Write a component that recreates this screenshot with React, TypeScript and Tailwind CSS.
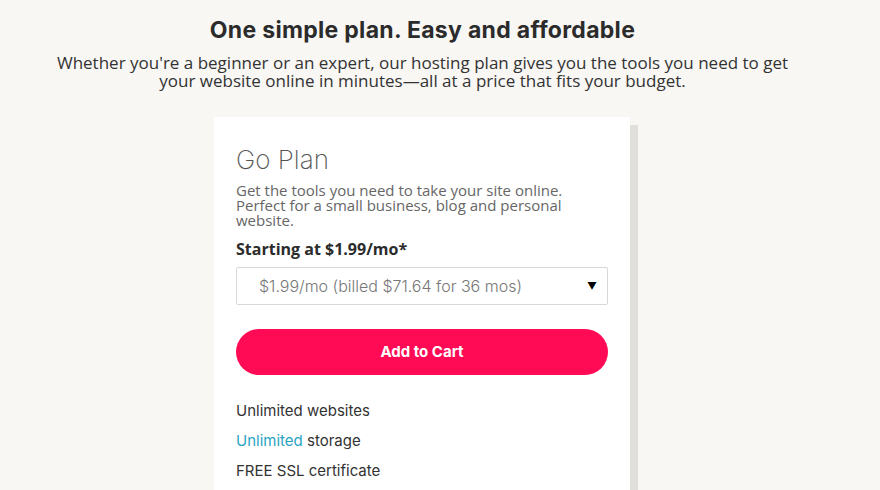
export default function App() {
  return (
    <div className="min-h-screen bg-[#f8f7f4] text-[#2b2b2b] overflow-hidden" style={{ height: 490 }}>
      <div className="w-[845px] flex flex-col items-center pt-[16px]">
        <h1 className="font-['Inter',sans-serif] font-bold text-[23px] leading-[28px] tracking-[0.3px] text-[#2b2b2b]">
          One simple plan. Easy and affordable
        </h1>
        <p className="mt-[10px] font-['Open_Sans',sans-serif] text-[17px] leading-[18px] text-[#333] text-center w-[745px]">
          Whether you're a beginner or an expert, our hosting plan gives you the tools you need to get your website online in minutes—all at a price that fits your budget.
        </p>
      </div>
      <div className="ml-[214px] mt-[27px] w-[416px] bg-white shadow-[8px_8px_0_#e0dfdb] px-[22px] pt-[28px] pb-[40px]">
        <h2 className="font-['Inter',sans-serif] font-extralight text-[26px] leading-[30px] text-[#555]">Go Plan</h2>
        <p className="mt-[8px] max-w-[340px] font-['Open_Sans',sans-serif] text-[15px] leading-[15px] text-[#666]">
          Get the tools you need to take your site online. Perfect for a small business, blog and personal website.
        </p>
        <p className="mt-[11px] font-['Open_Sans',sans-serif] font-bold text-[16px] leading-[20px] text-[#2b2b2b]">
          Starting at $1.99/mo*
        </p>
        <div className="mt-[8px] h-[38px] border border-[#d8d8d8] rounded-[2px] flex items-center justify-between pl-[22px] pr-[10px] font-['Inter',sans-serif] font-light text-[16px] text-[#777]">
          <span>$1.99/mo (billed $71.64 for 36 mos)</span>
          <span className="text-[10px] text-black">▼</span>
        </div>
        <button className="mt-[24px] w-full h-[46px] rounded-full bg-[#ff0a54] text-white font-['Inter',sans-serif] font-bold text-[15px]">
          Add to Cart
        </button>
        <ul className="mt-[27px] flex flex-col gap-[12px] font-['Inter',sans-serif] text-[15px] leading-[18px] text-[#333]">
          <li>Unlimited websites</li>
          <li><span className="text-[#2aa4c3]">Unlimited</span> storage</li>
          <li>FREE SSL certificate</li>
        </ul>
      </div>
    </div>
  );
}
